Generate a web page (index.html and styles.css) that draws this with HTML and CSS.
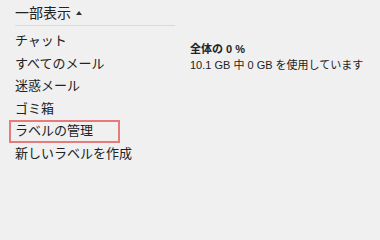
FILE: index.html
```html
<!DOCTYPE html>
<html lang="ja">
<head>
<meta charset="utf-8">
<link rel="stylesheet" href="styles.css">
</head>
<body>
<div class="page">
  <div class="nav">
    <div class="toggle">一部表示<span class="caret"></span></div>
    <div class="divider"></div>
    <ul class="items">
      <li class="item">チャット</li>
      <li class="item">すべてのメール</li>
      <li class="item">迷惑メール</li>
      <li class="item">ゴミ箱</li>
      <li class="item marked">ラベルの管理</li>
      <li class="item">新しいラベルを作成</li>
    </ul>
  </div>
  <div class="storage">
    <div class="usage-title">全体の 0 %</div>
    <div class="usage-detail">10.1 GB 中 0 GB を使用しています</div>
  </div>
</div>
</body>
</html>
```
FILE: styles.css
```css
html, body {
  margin: 0;
  background: #f0f0f0;
}
body {
  font-family: "Liberation Sans", "Noto Sans CJK JP", sans-serif;
  color: #222;
}
.page {
  display: flex;
  width: 380px;
  height: 208px;
  overflow: hidden;
}
.nav {
  width: 160px;
  flex-shrink: 0;
  padding-left: 15px;
  padding-top: 2px;
}
.toggle {
  font-size: 14px;
  line-height: 22px;
  display: flex;
  align-items: center;
}
.caret {
  display: inline-block;
  width: 0;
  height: 0;
  margin-left: 5px;
  border-left: 3.5px solid transparent;
  border-right: 3.5px solid transparent;
  border-bottom: 4px solid #333;
}
.divider {
  margin-top: 1px;
  border-top: 1px solid #dadada;
}
.items {
  list-style: none;
  margin: 4px 0 0 0;
  padding: 0;
}
.item {
  font-size: 13px;
  height: 22.5px;
  line-height: 22.5px;
  white-space: nowrap;
}
.marked {
  box-sizing: border-box;
  width: 111px;
  margin-left: -6px;
  padding-left: 4px;
  border: 2px solid #e57b7b;
  line-height: 18.5px;
}
.storage {
  margin-left: 15px;
  padding-top: 41px;
  font-size: 11px;
  line-height: 16px;
  white-space: nowrap;
}
.usage-title {
  font-weight: bold;
}
```
